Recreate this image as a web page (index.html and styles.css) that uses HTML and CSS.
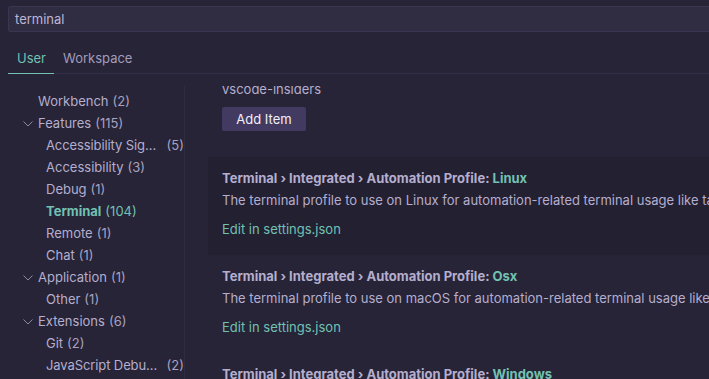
FILE: index.html
```html
<!DOCTYPE html>
<html>
<head>
<meta charset="utf-8">
<link rel="stylesheet" href="styles.css">
</head>
<body>
<div class="search"><span class="query">terminal</span></div>
<div class="tabs">
  <div class="tab active">User</div>
  <div class="tab">Workspace</div>
</div>
<div class="main">
  <nav class="tree">
    <div class="row l1"><span class="label">Workbench</span><span class="count">(2)</span></div>
    <div class="row l1"><svg class="chev" viewBox="0 0 10 6"><path d="M0.5 0.5 L5 5 L9.5 0.5"/></svg><span class="label">Features</span><span class="count">(115)</span></div>
    <div class="row l2"><span class="label trunc">Accessibility Signals</span><span class="count">(5)</span></div>
    <div class="row l2"><span class="label">Accessibility</span><span class="count">(3)</span></div>
    <div class="row l2"><span class="label">Debug</span><span class="count">(1)</span></div>
    <div class="row l2 sel"><span class="label">Terminal</span><span class="count">(104)</span></div>
    <div class="row l2"><span class="label">Remote</span><span class="count">(1)</span></div>
    <div class="row l2"><span class="label">Chat</span><span class="count">(1)</span></div>
    <div class="row l1"><svg class="chev" viewBox="0 0 10 6"><path d="M0.5 0.5 L5 5 L9.5 0.5"/></svg><span class="label">Application</span><span class="count">(1)</span></div>
    <div class="row l2"><span class="label">Other</span><span class="count">(1)</span></div>
    <div class="row l1"><svg class="chev" viewBox="0 0 10 6"><path d="M0.5 0.5 L5 5 L9.5 0.5"/></svg><span class="label">Extensions</span><span class="count">(6)</span></div>
    <div class="row l2"><span class="label">Git</span><span class="count">(2)</span></div>
    <div class="row l2"><span class="label trunc">JavaScript Debugger</span><span class="count">(2)</span></div>
  </nav>
  <section class="content">
    <div class="prev">
      <div class="value">vscode-insiders</div>
      <button class="btn">Add Item</button>
    </div>
    <div class="setting focused">
      <div class="title">Terminal › Integrated › Automation Profile: <span class="key">Linux</span></div>
      <div class="desc">The terminal profile to use on Linux for automation-related terminal usage like tasks and debug.</div>
      <a class="edit">Edit in settings.json</a>
    </div>
    <div class="setting">
      <div class="title">Terminal › Integrated › Automation Profile: <span class="key">Osx</span></div>
      <div class="desc">The terminal profile to use on macOS for automation-related terminal usage like tasks and debug.</div>
      <a class="edit">Edit in settings.json</a>
    </div>
    <div class="setting">
      <div class="title">Terminal › Integrated › Automation Profile: <span class="key">Windows</span></div>
      <div class="desc">The terminal profile to use for automation-related terminal usage like tasks and debug.</div>
      <a class="edit">Edit in settings.json</a>
    </div>
  </section>
</div>
</body>
</html>
```
FILE: styles.css
```css
html, body {
  margin: 0;
  padding: 0;
  height: 100%;
  overflow: hidden;
}
body {
  background: #262436;
  color: #b5aece;
  font-family: Inter, "Noto Sans", sans-serif;
  font-size: 13px;
}
.search {
  margin: 6px -20px 0 8px;
  height: 24px;
  background: #302c41;
  border: 1px solid #3a3550;
  border-radius: 2px;
  display: flex;
  align-items: center;
  padding-left: 6px;
  font-size: 13px;
  color: #bdb6d6;
}
.tabs {
  margin: 12px 0 0 8px;
  height: 29px;
  border-bottom: 1px solid #332e47;
  display: flex;
  align-items: center;
}
.tab {
  height: 29px;
  line-height: 28px;
  padding: 0 8px 0 9px;
  color: #a39cbd;
  box-sizing: border-box;
}
.tab.active {
  color: #72c1b3;
  border-bottom: 1px solid #72c1b3;
  margin-bottom: -1px;
  height: 30px;
}
.main {
  display: flex;
  margin-top: 12px;
  height: 400px;
  overflow: hidden;
}
.tree {
  width: 176px;
  margin-left: 8px;
  padding-top: 4px;
  border-right: 1px solid #2f2b42;
  flex: none;
}
.row {
  height: 22px;
  display: flex;
  align-items: center;
  white-space: nowrap;
  position: relative;
}
.row.l1 { padding-left: 30px; }
.row.l2 { padding-left: 38px; }
.chev {
  position: absolute;
  left: 15px;
  top: 9px;
  width: 10px;
  height: 6px;
  fill: none;
  stroke: #8e88a6;
  stroke-width: 1;
}
.label { color: #b5aece; }
.count { color: #a8a1c0; margin-left: 4px; }
.trunc {
  display: inline-block;
  max-width: 117px;
  overflow: hidden;
  text-overflow: ellipsis;
  letter-spacing: -0.1px;
}
.row.sel .label { color: #72c1b3; font-weight: 700; }
.row.sel .count { color: #72c1b3; }
.content {
  flex: 1;
  min-width: 0;
  padding-left: 23px;
  white-space: nowrap;
}
.prev {
  padding-left: 14px;
  margin-top: -6px;
}
.value {
  height: 18px;
  line-height: 18px;
  color: #b5aece;
}
.btn {
  margin-top: 9px;
  height: 24px;
  width: 84px;
  border: none;
  border-radius: 2px;
  background: #433a62;
  color: #f2eff8;
  font-family: inherit;
  font-size: 13px;
  padding: 0;
  display: block;
}
.setting {
  padding: 12px 0 17px 14px;
  margin-top: 0;
}
.setting.focused {
  margin-top: 26px;
  background: #232032;
}
.title {
  height: 18px;
  line-height: 18px;
  font-weight: 700;
  color: #b5aece;
}
.key { color: #72c1b3; }
.desc {
  margin-top: 4px;
  height: 18px;
  line-height: 18px;
  color: #b5aece;
}
.edit {
  display: block;
  margin-top: 11px;
  height: 18px;
  line-height: 18px;
  color: #72c1b3;
}
```
